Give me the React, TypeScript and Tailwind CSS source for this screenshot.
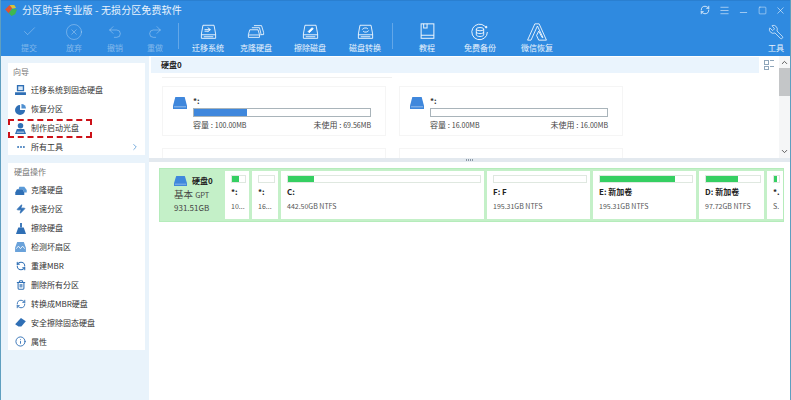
import type { ReactNode } from 'react';
import { Check, CircleX, Undo2, Redo2, RefreshCw, Menu, Minus, Square, X, Wrench, ChevronRight, ChevronUp, ChevronDown, Zap, Trash2, RefreshCcw, Info, MoreHorizontal } from 'lucide-react';

const FONT = "font-['Noto_Sans_CJK_SC','Noto_Sans',sans-serif]";

function DriveOutline({ children }: { children?: ReactNode }) {
  return (
    <svg width="19" height="16" viewBox="0 0 24 20" fill="none" stroke="white" strokeWidth="1.2" strokeOpacity="0.9">
      <path d="M5 1.500h14l2 11v5.500H3v-5.500z" />
      <path d="M3 13.500h18M6 16h12" />
      {children}
    </svg>
  );
}

function CloneIcon() {
  return (
    <svg width="18" height="15" viewBox="0 0 26 20" fill="none" stroke="white" strokeWidth="1.3" strokeOpacity="0.9">
      <path d="M10 1.500h11l3 10v3h-4" />
      <path d="M7 4.500h11l2 8v3" />
      <path d="M4 7.500h12l2 7v4H2v-4z" />
      <path d="M2 15h16" />
    </svg>
  );
}

function BookIcon() {
  return (
    <svg width="15" height="17" viewBox="0 0 17 20" fill="none" stroke="white" strokeWidth="1.2" strokeOpacity="0.9">
      <rect x="1" y="1" width="15" height="17" />
      <path d="M1 14.500h15M4 1v5h4V1" />
    </svg>
  );
}

function BackupIcon() {
  return (
    <svg width="18" height="18" viewBox="0 0 22 22" fill="none" stroke="white" strokeWidth="1.2" strokeOpacity="0.9">
      <path d="M17 4A9.500 9.500 0 1 0 20 11" />
      <circle cx="18.500" cy="5" r="1" fill="white" />
      <ellipse cx="11" cy="7.500" rx="4.500" ry="2" />
      <path d="M6.500 7.500v7c0 1 2 2 4.500 2s4.500-1 4.500-2v-7M6.500 11c0 1 2 2 4.500 2s4.500-1 4.500-2" />
    </svg>
  );
}

function WechatRecoverIcon() {
  return (
    <svg width="22" height="18" viewBox="0 0 24 21" fill="none" stroke="white" strokeWidth="1.1" strokeOpacity="0.9">
      <path d="M9.500 1h5L23 20h-9l-2.500-5.500L14 9.500 18 17h1L12.500 3.500 5 20H1z" />
    </svg>
  );
}

const toolsLeft = [
  { label: '提交', cls: 'ml-[8px]', icon: <Check size={15} strokeWidth={1.2} /> },
  { label: '放弃', cls: 'ml-[5px]', icon: <CircleX size={18} strokeWidth={1} /> },
  { label: '撤销', cls: 'ml-px', icon: <Undo2 size={16} strokeWidth={1.2} /> },
  { label: '重做', cls: 'ml-0', icon: <Redo2 size={16} strokeWidth={1.2} /> },
];

const toolsMid = [
  {
    label: '迁移系统',
    cls: 'ml-[9px]',
    icon: (
      <DriveOutline>
        <path d="M7 7h7M11 4.500 14.500 7 11 9.500M7 9h5" />
      </DriveOutline>
    ),
  },
  { label: '克隆硬盘', cls: 'ml-[8px]', icon: <CloneIcon /> },
  {
    label: '擦除磁盘',
    cls: 'ml-[14px]',
    icon: (
      <DriveOutline>
        <path d="M9 9.500 14 4.500l1.500 1.500-5 5z" fill="white" />
      </DriveOutline>
    ),
  },
  {
    label: '磁盘转换',
    cls: 'ml-[15px]',
    icon: (
      <DriveOutline>
        <path d="M8 7a4 3 0 0 1 7-1M16 8a4 3 0 0 1-7 1" />
      </DriveOutline>
    ),
  },
];

const toolsRight = [
  { label: '教程', cls: 'ml-[14px]', icon: <BookIcon /> },
  { label: '免费备份', cls: 'ml-[13px]', icon: <BackupIcon /> },
  { label: '微信恢复', cls: 'ml-[17px]', icon: <WechatRecoverIcon /> },
];

function ToolButton({ label, icon, cls, dim }: { label: string; icon: ReactNode; cls: string; dim?: boolean }) {
  return (
    <div className={`${cls} w-[40px] shrink-0 flex flex-col items-center ${dim ? 'text-white/40' : 'text-white/90'}`}>
      <div className="h-[23px] flex items-center justify-center">{icon}</div>
      <span className="text-[8px] leading-[10px] whitespace-nowrap">{label}</span>
    </div>
  );
}

const DriveGlyph = ({ w = 14, h = 12 }: { w?: number; h?: number }) => (
  <svg width={w} height={h} viewBox="0 0 15 11" preserveAspectRatio="none">
    <path d="M2.500 0h10L15 8v3H0V8z" fill="#3f87dc" />
    <path d="M1 9h13" stroke="#cfe2f7" strokeWidth="0.6" />
  </svg>
);

function Laptop() {
  return (
    <svg width="11" height="10" viewBox="0 0 12 11">
      <path d="M2 0h8v7H2zM0 8h12v3H0z" fill="#2f6fb5" />
      <path d="M3.500 1.500h5v4h-5z" fill="#dbe9f7" />
    </svg>
  );
}

function PieIcon() {
  return (
    <svg width="11" height="11" viewBox="0 0 12 12">
      <path d="M5.500 1v5.500H11A5.500 5.500 0 1 1 5.500 1z" fill="#2f6fb5" />
      <path d="M7 0a5 5 0 0 1 5 5H7z" fill="#4f8fd0" />
    </svg>
  );
}

function BootIcon() {
  return (
    <svg width="11" height="11" viewBox="0 0 12 12">
      <circle cx="6" cy="3" r="3" fill="#2f6fb5" />
      <path d="M2 6.500h8L12 12H0z" fill="#2f6fb5" />
      <path d="M2 10h8" stroke="#fff" strokeWidth="0.8" />
    </svg>
  );
}

function CloneSmall() {
  return (
    <svg width="12" height="9" viewBox="0 0 14 11">
      <path d="M5 1h6l3 4v3h-3L9 4H4z" fill="#5a9ad8" />
      <path d="M2 4h7l2 4v3H0V8z" fill="#2f6fb5" />
    </svg>
  );
}

function BroomIcon() {
  return (
    <svg width="10" height="11" viewBox="0 0 11 12">
      <path d="M4.500 0h2v5h-2z" fill="#2f6fb5" />
      <path d="M2.500 5h6L11 12H0z" fill="#2f6fb5" />
    </svg>
  );
}

function ScanIcon() {
  return (
    <svg width="11" height="10" viewBox="0 0 13 12">
      <path d="M2.500 0h8L13 7v5H0V7z" fill="#6aa2da" />
      <path d="M1.500 8 4 5l2.500 3L9 5l2.500 3" stroke="#fff" strokeWidth="1" fill="none" />
    </svg>
  );
}

function EraserIcon() {
  return (
    <svg width="11" height="9" viewBox="0 0 13 11">
      <path d="M7 0l6 4-5.500 6.500H4L0 7.500z" fill="#2f6fb5" />
    </svg>
  );
}

const guideRows = [
  { label: '迁移系统到固态硬盘', icon: <Laptop /> },
  { label: '恢复分区', icon: <PieIcon /> },
  { label: '制作启动光盘', icon: <BootIcon />, marked: true },
  { label: '所有工具', icon: <MoreHorizontal size={10} className="text-[#2f6fb5]" strokeWidth={2.5} />, more: true },
];

const diskRows = [
  { label: '克隆硬盘', icon: <CloneSmall /> },
  { label: '快速分区', icon: <Zap size={10} fill="#2f6fb5" className="text-[#2f6fb5]" /> },
  { label: '擦除硬盘', icon: <BroomIcon /> },
  { label: '检测坏扇区', icon: <ScanIcon /> },
  { label: '重建MBR', icon: <RefreshCcw size={10} strokeWidth={2.5} className="text-[#2f6fb5]" /> },
  { label: '删除所有分区', icon: <Trash2 size={10} strokeWidth={2.5} className="text-[#2f6fb5]" /> },
  { label: '转换成MBR硬盘', icon: <RefreshCw size={10} strokeWidth={2.2} className="text-[#2f6fb5]" /> },
  { label: '安全擦除固态硬盘', icon: <EraserIcon /> },
  { label: '属性', icon: <Info size={11} strokeWidth={2} className="text-[#2f6fb5]" /> },
];

function SideRow({ label, icon, marked, more }: { label: string; icon: ReactNode; marked?: boolean; more?: boolean }) {
  return (
    <div className="relative h-[18.9px] flex items-center pl-[6px] pr-[5px] text-[8px] text-[#333]">
      <div className="w-[13px] flex justify-center">{icon}</div>
      <span className="ml-[4px] flex-1 whitespace-nowrap">{label}</span>
      {more && <ChevronRight size={10} className="text-[#5b9bd5]" />}
      {marked && <div className="absolute left-0 top-0 w-[84px] h-[19px] border-2 border-dashed border-[#cc1118]" />}
    </div>
  );
}

function DiskCard({ used, capacity, free }: { used: string; capacity: string; free: string }) {
  return (
    <div className="w-[224px] h-[50px] border border-[#f5f5f5] flex pl-[10px] pr-[14px]">
      <div className="mt-[10px]">
        <DriveGlyph />
      </div>
      <div className="ml-[6px] flex-1">
        <div className="mt-[7px] h-[14px] text-[8px] leading-[14px] font-bold text-[#333]">*:</div>
        <div className="h-[9px] border border-[#a9b4ba] bg-white">
          <div className={`h-full bg-[#3f87dc] ${used}`} />
        </div>
        <div className="mt-[1px] flex justify-between text-[8px] leading-[14px] text-[#444]">
          <span>容量 : <span className="text-[7px]">{capacity}</span></span>
          <span>未使用 : <span className="text-[7px]">{free}</span></span>
        </div>
      </div>
    </div>
  );
}

const partitions = [
  { w: 'w-[24px]', fill: 'w-[7px]', name: '*:', size: '10...' },
  { w: 'w-[26px]', fill: 'w-0', name: '*:', size: '16...' },
  { w: 'w-[203px]', fill: 'w-[26px]', name: 'C:', size: '442.50GB NTFS' },
  { w: 'w-[103px]', fill: 'w-0', name: 'F: F', size: '195.31GB NTFS' },
  { w: 'w-[103px]', fill: 'w-[75px]', name: 'E: 新加卷', size: '195.31GB NTFS' },
  { w: 'w-[65px]', fill: 'w-[32px]', name: 'D: 新加卷', size: '97.72GB NTFS' },
  { w: 'w-[16px]', fill: 'w-[3px]', name: '*.', size: 'S.' },
];

export default function App() {
  return (
    <div className={`${FONT} w-[791px] h-[400px] overflow-hidden flex flex-col bg-white border-x border-[#5f9fc0]`}>
      <div className="h-[56px] shrink-0 bg-[#2f8ae0] border-t border-[#2a7fd0]">
        <div className="h-[18px] flex items-center pl-[4px] pr-[4px] text-white/90">
          <svg width="13" height="11" viewBox="0 0 14 12">
            <path d="M0 5 5 0l3 3-4 6z" fill="#e0532f" />
            <path d="M5 0h5l2 3-4 1z" fill="#d9c23a" />
            <path d="M4 9l4-5 5 1-2 5-4 2z" fill="#3fb84f" />
          </svg>
          <span className="ml-[4px] text-[10px] leading-none tracking-[0.1px]">分区助手专业版 - 无损分区免费软件</span>
          <div className="ml-auto flex items-center gap-[8.5px]">
            <RefreshCw size={10} />
            <Menu size={11} strokeWidth={1.3} />
            <Minus size={11} strokeWidth={1.3} className="mt-[4px]" />
            <Square size={9} strokeWidth={1.3} />
            <X size={11} strokeWidth={1.3} />
          </div>
        </div>
        <div className="h-[34px] flex items-start pt-[1px]">
          {toolsLeft.map(t => <ToolButton key={t.label} {...t} dim />)}
          <div className="ml-[3px] mt-[3px] w-px h-[26px] bg-white/25" />
          {toolsMid.map(t => <ToolButton key={t.label} {...t} />)}
          <div className="ml-[7px] mt-[3px] w-px h-[26px] bg-white/25" />
          {toolsRight.map(t => <ToolButton key={t.label} {...t} />)}
          <div className="ml-auto mr-[-6px]">
            <ToolButton label="工具" cls="ml-0" icon={<Wrench size={16} strokeWidth={1.1} className="-scale-x-100" />} />
          </div>
        </div>
      </div>

      <div className="flex-1 flex min-h-0">
        <div className="w-[148px] shrink-0 bg-[#e9f3fb] pl-[7px] pr-[4px] pt-[7px]">
          <div className="bg-white h-[92px]">
            <div className="h-[19px] pl-[5px] pt-[3px] text-[8px] leading-[12px] text-[#777]">向导</div>
            <div className="-mt-[1px]">
              {guideRows.map(r => <SideRow key={r.label} {...r} />)}
            </div>
          </div>
          <div className="bg-white mt-[8px] h-[187px]">
            <div className="h-[18px] pl-[6px] pt-[3px] text-[8px] leading-[12px] text-[#777]">硬盘操作</div>
            {diskRows.map(r => <SideRow key={r.label} {...r} />)}
          </div>
        </div>

        <div className="flex-1 flex flex-col min-w-0">
          <div className="h-[102px] shrink-0 flex">
            <div className="flex-1 min-w-0 overflow-hidden pt-px">
              <div className="h-[16px] flex items-center pl-[2px] pr-[5px]">
                <div className="flex-1 h-full bg-[#eaf4fd] pl-[10px] text-[8px] leading-[16px] font-bold text-[#222]">硬盘0</div>
                <div className="ml-[5px] w-[10px] h-[10px] grid grid-cols-2 gap-[1px]">
                  <div className="border border-[#8fa6ba]" />
                  <div className="border-t border-[#8fa6ba]" />
                  <div className="border border-[#8fa6ba]" />
                  <div className="border-t border-[#8fa6ba]" />
                </div>
              </div>
              <div className="ml-[13px] mt-[4px] w-[230px] h-px bg-[#f0f0f0]" />
              <div className="ml-[13px] mt-[8px] flex gap-[13px]">
                <DiskCard used="w-[30%]" capacity="100.00MB" free="69.56MB" />
                <DiskCard used="w-0" capacity="16.00MB" free="16.00MB" />
              </div>
              <div className="ml-[13px] mt-[12px] flex gap-[13px]">
                <div className="w-[224px] h-[20px] border border-[#f5f5f5]" />
                <div className="w-[224px] h-[20px] border border-[#f5f5f5]" />
              </div>
            </div>
            <div className="w-[11px] shrink-0 flex flex-col items-center bg-[#f5f6f7]">
              <ChevronUp size={9} strokeWidth={2.5} className="mt-[2px] text-[#555]" />
              <div className="mt-[1px] w-full h-[28px] bg-[#c4c6c8]" />
              <ChevronDown size={9} strokeWidth={2.5} className="mt-auto mb-[2px] text-[#555]" />
            </div>
          </div>
          <div className="h-[4px] shrink-0 bg-[#e3e9ef] flex items-center justify-center gap-px">
            <div className="w-px h-[2px] bg-[#8a98a6]" />
            <div className="w-px h-[2px] bg-[#8a98a6]" />
            <div className="w-px h-[2px] bg-[#8a98a6]" />
            <div className="w-px h-[2px] bg-[#8a98a6]" />
          </div>

          <div className="ml-[10px] mt-[6px] w-[625px] h-[54px] flex items-stretch gap-[3px] bg-[#c4f0c8] border border-[#b5ecbb] p-[2px] pl-0 text-[#444]">
            <div className="w-[62px] shrink-0 pl-[14px] pt-[3px] text-[9.500px] leading-[14px] whitespace-nowrap">
              <div className="flex items-center gap-[5px]">
                <DriveGlyph w={13} h={10} />
                <span className="text-[8px] font-bold text-[#222]">硬盘0</span>
              </div>
              <div className="mt-[-1px]">基本 <span className="text-[7.500px]">GPT</span></div>
              <div className="text-[8px] leading-[12px]">931.51GB</div>
            </div>
            {partitions.map(p => (
              <div key={p.size + p.name} className={`${p.w} shrink-0 bg-white overflow-hidden pl-[6px] pr-[3px] pt-[4px] whitespace-nowrap`}>
                <div className="h-[8px] border border-[#dfe8e0] bg-white">
                  <div className={`h-full bg-[#35cf62] ${p.fill}`} />
                </div>
                <div className="mt-[3px] text-[8px] leading-[12px] font-bold text-[#222]">{p.name}</div>
                <div className="mt-[2px] text-[7px] leading-[12px] text-[#555]">{p.size}</div>
              </div>
            ))}
          </div>
        </div>
      </div>
    </div>
  );
}
